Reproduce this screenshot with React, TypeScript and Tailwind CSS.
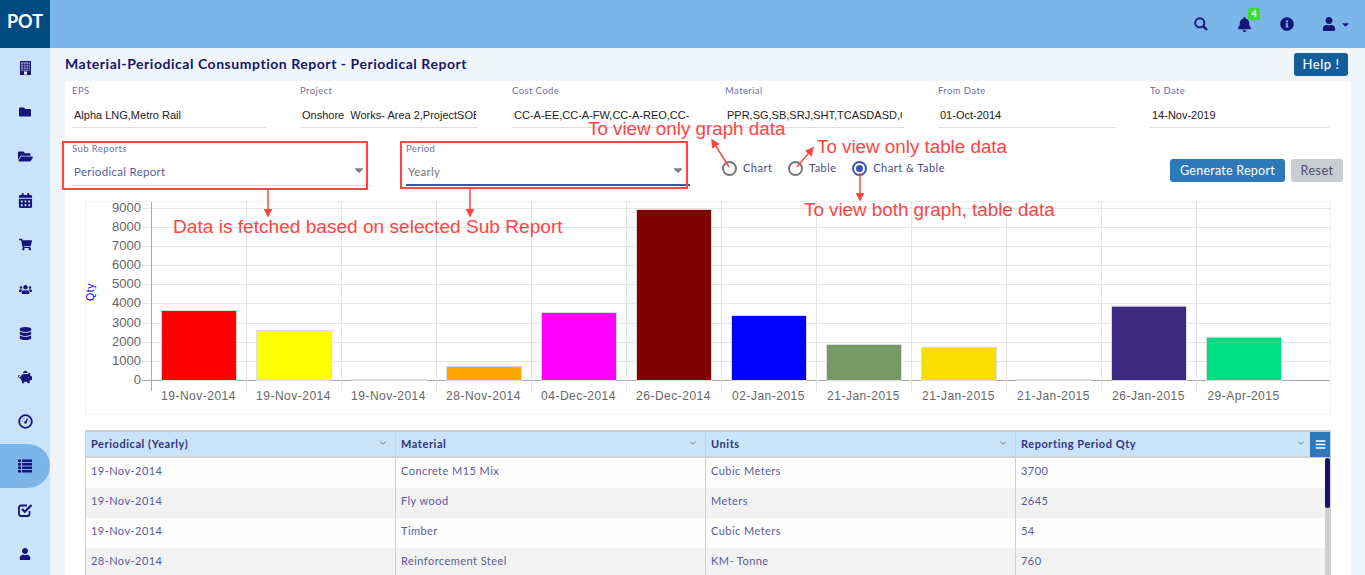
import { FaBars, FaBell, FaCalendarAlt, FaCaretDown, FaDatabase, FaFolder, FaFolderOpen, FaInfoCircle, FaPiggyBank, FaShoppingCart, FaUser, FaUsers } from 'react-icons/fa';
import { FiChevronDown } from 'react-icons/fi';

function BuildingIcon() {
  return (
    <svg width="11" height="14" viewBox="0 0 11 14">
      <rect x="0.5" y="0.5" width="10" height="13" fill="#8a8ab0" stroke="#14147a" />
      <path d="M1 3.5h9M1 6h9M1 8.5h9M3.5 1v9M6 1v9M8.5 1v9" stroke="#14147a" strokeWidth="0.6" />
      <rect x="1" y="10" width="9" height="3.5" fill="#14147a" />
      <rect x="4" y="10.5" width="3" height="3" fill="#e8f2fb" />
    </svg>
  );
}

function GaugeIcon() {
  return (
    <svg width="15" height="15" viewBox="0 0 15 15">
      <circle cx="7.5" cy="7.5" r="6.3" fill="none" stroke="#14147a" strokeWidth="1.8" />
      <path d="M7.5 8.5L9.5 4.5" stroke="#14147a" strokeWidth="1.4" />
      <circle cx="7.5" cy="8.5" r="1.3" fill="#14147a" />
      <path d="M4 7h1M10.5 7h1M5.5 4.5h1" stroke="#4a4a9a" strokeWidth="1" />
    </svg>
  );
}

function CheckIcon() {
  return (
    <svg width="15" height="14" viewBox="0 0 15 14" fill="none">
      <path d="M11.5 8v3a2 2 0 0 1-2 2H3a2 2 0 0 1-2-2V4.5a2 2 0 0 1 2-2h6" stroke="#14147a" strokeWidth="1.8" />
      <path d="M4 6l2.8 2.8L13.5 2" stroke="#14147a" strokeWidth="2.2" />
    </svg>
  );
}

function SearchIcon() {
  return (
    <svg width="14" height="14" viewBox="0 0 14 14" fill="none" stroke="#14147a">
      <circle cx="5.8" cy="5.8" r="4.6" strokeWidth="1.9" />
      <path d="M9.3 9.3L13 13" strokeWidth="2.3" />
    </svg>
  );
}

function ListIcon() {
  return (
    <svg width="14" height="14" viewBox="0 0 14 14" fill="#14147a">
      <path d="M0 0.5h3v2.6H0zM4 0.5h10v2.6H4zM0 4h3v2.6H0zM4 4h10v2.6H4zM0 7.5h3v2.6H0zM4 7.5h10v2.6H4zM0 11h3v2.6H0zM4 11h10v2.6H4z" />
    </svg>
  );
}

const navIcons = [
  <BuildingIcon />,
  <FaFolder size={12} />,
  <FaFolderOpen size={15} />,
  <FaCalendarAlt size={15} />,
  <FaShoppingCart size={13} />,
  <FaUsers size={13} />,
  <FaDatabase size={13} />,
  <FaPiggyBank size={14} />,
  <GaugeIcon />,
  <ListIcon />,
  <CheckIcon />,
  <FaUser size={12} />,
];

const filters = [
  { label: 'EPS', value: 'Alpha LNG,Metro Rail', width: 'w-[194px]' },
  { label: 'Project', value: 'Onshore  Works- Area 2,ProjectSOB', width: 'w-[178px]' },
  { label: 'Cost Code', value: 'CC-A-EE,CC-A-FW,CC-A-REO,CC-', width: 'w-[179px]' },
  { label: 'Material', value: 'PPR,SG,SB,SRJ,SHT,TCASDASD,CC', width: 'w-[179px]' },
  { label: 'From Date', value: '01-Oct-2014', width: 'w-[178px]' },
  { label: 'To Date', value: '14-Nov-2019', width: 'w-[179px]' },
];

const bars = [
  { date: '19-Nov-2014', qty: 3655, color: '#ff0000' },
  { date: '19-Nov-2014', qty: 2610, color: '#ffff00' },
  { date: '19-Nov-2014', qty: 54, color: '#808080' },
  { date: '28-Nov-2014', qty: 730, color: '#ffa500' },
  { date: '04-Dec-2014', qty: 3550, color: '#ff00ff' },
  { date: '26-Dec-2014', qty: 8930, color: '#800000' },
  { date: '02-Jan-2015', qty: 3395, color: '#0000ff' },
  { date: '21-Jan-2015', qty: 1880, color: '#779966' },
  { date: '21-Jan-2015', qty: 1740, color: '#f9dc00' },
  { date: '21-Jan-2015', qty: 40, color: '#808080' },
  { date: '26-Jan-2015', qty: 3880, color: '#3b2a80' },
  { date: '29-Apr-2015', qty: 2260, color: '#00dc82' },
];

const rows = [
  ['19-Nov-2014', 'Concrete M15 Mix', 'Cubic Meters', '3700'],
  ['19-Nov-2014', 'Fly wood', 'Meters', '2645'],
  ['19-Nov-2014', 'Timber', 'Cubic Meters', '54'],
  ['28-Nov-2014', 'Reinforcement Steel', 'KM- Tonne', '760'],
];

const columns = ['Periodical (Yearly)', 'Material', 'Units', 'Reporting Period Qty'];

function Chart() {
  const left = 66;
  const step = 95;
  const base = 179;
  const tick = 19.15;
  return (
    <svg width="1244" height="212" className="block">
      {Array.from({ length: 10 }).map((_, i) => {
        const y = Math.round(base - i * tick) - 0.5;
        return (
          <g key={i}>
            <line x1={left - 10} x2="1244" y1={y} y2={y} stroke={i === 0 ? '#a8a8a8' : '#e4e4e4'} />
            <text x={left - 11} y={y + 3} textAnchor="end" fontSize="13" fill="#666" fontFamily="Liberation Sans">{i * 1000}</text>
          </g>
        );
      })}
      {Array.from({ length: 12 }).map((_, i) => (
        <line key={i} x1={left + i * step - 0.5} x2={left + i * step - 0.5} y1="0" y2="189" stroke={i === 0 ? '#a8a8a8' : '#e4e4e4'} />
      ))}
      {bars.map((bar, i) => {
        const h = (bar.qty * tick) / 1000;
        return (
          <g key={i}>
            <rect x={left + i * step + 9.5} y={base - h - 0.5} width="75" height={h} fill={bar.color} stroke="#dcdcdc" />
            <text x={left + i * step + 46.5} y="198" textAnchor="middle" fontSize="12" letterSpacing="0.5" fill="#666" fontFamily="Liberation Sans">{bar.date}</text>
          </g>
        );
      })}
      <text transform="translate(8 90) rotate(-90)" textAnchor="middle" fontSize="10.5" letterSpacing="0.5" fill="#0000ff" fontFamily="Liberation Sans">Qty</text>
    </svg>
  );
}

function Annotations() {
  return (
    <div className="absolute inset-0 pointer-events-none font-['Liberation_Sans',sans-serif] text-[18.8px] leading-none text-[#ff4444]">
      <div className="absolute left-[62px] top-[141px] w-[306px] h-[49px] border-2 border-[#ff4444]" />
      <div className="absolute left-[400px] top-[141px] w-[288px] h-[48px] border-2 border-[#ff4444]" />
      <span className="absolute left-[173px] top-[217px] text-[19.1px]">Data is fetched based on selected Sub Report</span>
      <span className="absolute left-[588px] top-[120px]">To view only graph data</span>
      <span className="absolute left-[817px] top-[138px]">To view only table data</span>
      <span className="absolute left-[804px] top-[201px]">To view both graph, table data</span>
      <svg width="1365" height="575" className="absolute inset-0">
        <defs>
          <marker id="head" markerWidth="7" markerHeight="7" refX="5" refY="3" orient="auto">
            <path d="M0 0L6 3L0 6z" fill="#ff4444" />
          </marker>
        </defs>
        <g stroke="#ff4444" strokeWidth="1.5">
          <line x1="268" y1="188" x2="268" y2="216" markerEnd="url(#head)" />
          <line x1="470" y1="188" x2="470" y2="216" markerEnd="url(#head)" />
          <line x1="729" y1="167" x2="712" y2="140" markerEnd="url(#head)" />
          <line x1="797" y1="167" x2="813" y2="148" markerEnd="url(#head)" />
          <line x1="860" y1="173" x2="860" y2="200" markerEnd="url(#head)" />
        </g>
      </svg>
    </div>
  );
}

function Radio({ label, checked }: { label: string; checked?: boolean }) {
  return (
    <label className="flex items-center gap-[6px]">
      <span className={`w-[15px] h-[15px] rounded-full border-2 flex items-center justify-center ${checked ? 'border-[#3f51b5]' : 'border-[#757575]'}`}>
        {checked && <span className="w-[7px] h-[7px] rounded-full bg-[#3f51b5]" />}
      </span>
      <span className="text-[11px] tracking-[0.5px] text-[#4a4a8a]">{label}</span>
    </label>
  );
}

export default function App() {
  return (
    <div className="relative w-[1365px] h-[575px] overflow-hidden bg-[#f0f5f9] font-['Lato',sans-serif]">
      <header className="flex h-[48px] bg-[#7cb6e8]">
        <div className="w-[50px] pb-[5px] flex items-center justify-center bg-[#024a82] text-white text-[18px] font-bold">POT</div>
        <div className="flex-1 flex items-center justify-end text-[#14147a] text-[14px]">
          <div className="mr-[29px]"><SearchIcon /></div>
          <div className="relative mr-[28px]">
            <FaBell className="text-[15px]" />
            <span className="absolute -top-[9px] left-[11px] w-[12px] h-[12px] rounded-[2px] bg-[#3ddc2e] text-white text-[9px] leading-[12px] text-center font-bold">4</span>
          </div>
          <FaInfoCircle className="mr-[28px]" />
          <FaUser className="mr-[4px]" />
          <FaCaretDown className="mr-[14px] text-[11px]" />
        </div>
      </header>
      <div className="flex h-[527px]">
        <nav className="w-[50px] shrink-0 bg-[#c9e4f8] overflow-hidden">
          <div className="-mt-[2px]">
            {navIcons.map((icon, i) => (
              <div key={i} className={`h-[44.2px] flex items-center justify-center text-[#14147a] ${i === 9 ? 'bg-[#7cb6e8] rounded-r-[22px]' : ''}`}>
                {icon}
              </div>
            ))}
          </div>
        </nav>
        <main className="flex-1 pl-[15px] pr-[14px]">
          <div className="flex items-center justify-between h-[33px] pr-[3px]">
            <h1 className="pb-[2px] text-[14px] font-bold tracking-[0.54px] text-[#14146e]">Material-Periodical Consumption Report - Periodical Report</h1>
            <button className="h-[23px] w-[54px] rounded-[3px] bg-[#125f9b] text-white text-[13px] font-medium tracking-[0.5px]">Help !</button>
          </div>
          <section className="bg-white rounded-t-[4px] h-[494px] pl-[7px] pt-[5px]">
            <div className="flex gap-[34px]">
              {filters.map((f) => (
                <div key={f.label} className={`${f.width} h-[42px] border-b border-[#dedede]`}>
                  <div className="text-[9.5px] leading-[10px] tracking-[0.4px] text-[#6f6fa3]">{f.label}</div>
                  <div className="mt-[13px] mx-[2px] text-[11px] leading-[12px] whitespace-pre overflow-hidden font-['Liberation_Sans',sans-serif] text-[#222]">{f.value}</div>
                </div>
              ))}
            </div>
            <div className="flex mt-[16px] h-[42px]">
              <div className="relative w-[300px] h-[42px] border-b border-[#dedede]">
                <div className="text-[9.5px] leading-[10px] tracking-[0.4px] text-[#6f6fa3]">Sub Reports</div>
                <div className="mt-[11px] px-[2px] text-[11.5px] leading-[14px] tracking-[0.3px] text-[#5b5ba0]">Periodical Report</div>
                <FaCaretDown className="absolute right-[6px] top-[19px] text-[14px] text-[#808080]" />
              </div>
              <div className="relative ml-[34px] w-[284px] h-[42px] border-b-2 border-[#3f51b5]">
                <div className="text-[9.5px] leading-[10px] tracking-[0.4px] text-[#6f6fa3]">Period</div>
                <div className="mt-[11px] px-[2px] text-[11.5px] leading-[14px] tracking-[0.3px] text-[#757575]">Yearly</div>
                <FaCaretDown className="absolute right-[5px] top-[19px] text-[14px] text-[#808080]" />
              </div>
              <div className="flex items-start gap-[15.5px] ml-[32px] pt-[16px]">
                <Radio label="Chart" />
                <Radio label="Table" />
                <Radio label="Chart & Table" checked />
              </div>
              <div className="ml-auto flex items-start gap-[6px] pr-[8px] pt-[15px]">
                <button className="h-[23px] w-[115px] pt-[1px] rounded-[3px] bg-[#2e7ab8] text-white text-[12.5px] tracking-[0.25px]">Generate Report</button>
                <button className="h-[23px] w-[52px] pt-[1px] rounded-[3px] bg-[#c9ccd1] text-[#4a4a70] text-[12.5px] tracking-[0.5px]">Reset</button>
              </div>
            </div>
            <div className="mt-[15px] ml-[13px] w-[1246px] h-[214px] border border-[#efefef]">
              <Chart />
            </div>
            <div className="mt-[15px] ml-[13px] w-[1246px] border-t-2 border-x border-[#d0d0d0]">
              <div className="relative flex h-[26px] bg-[#c9e4f8] border-b-2 border-[#d0d0d0]">
                {columns.map((c, i) => (
                  <div key={c} className={`relative ${i === 3 ? 'w-[314px]' : 'w-[310px] border-r border-[#d0d0d0]'} flex items-center pl-[5px] pt-[1px] text-[11px] font-bold tracking-[0.55px] text-[#33337f]`}>
                    {c}
                    <FiChevronDown className={`absolute top-[6px] text-[10px] text-[#666] ${i === 3 ? 'right-[24px]' : 'right-[7px]'}`} />
                  </div>
                ))}
                <div className="absolute right-0 top-0 w-[20px] h-[25px] bg-[#2e7ab8] flex items-center justify-center text-white text-[11px]"><FaBars /></div>
              </div>
              <div className="relative">
                {rows.map((r, i) => (
                  <div key={i} className={`flex h-[30px] ${i % 2 ? 'bg-[#f2f2f2]' : 'bg-[#fdfdfd]'}`}>
                    {r.map((cell, j) => (
                      <div key={j} className={`${j === 3 ? 'w-[314px]' : 'w-[310px] border-r border-[#d0d0d0]'} pl-[5px] pt-[5px] text-[11px] tracking-[0.45px] text-[#5a5a9a]`}>{cell}</div>
                    ))}
                  </div>
                ))}
                <div className="absolute right-0 top-0 bottom-0 w-[5px] bg-[#cfcfcf]">
                  <div className="h-[50px] rounded-[3px] bg-[#14146e]" />
                </div>
              </div>
            </div>
          </section>
        </main>
      </div>
      <Annotations />
    </div>
  );
}
